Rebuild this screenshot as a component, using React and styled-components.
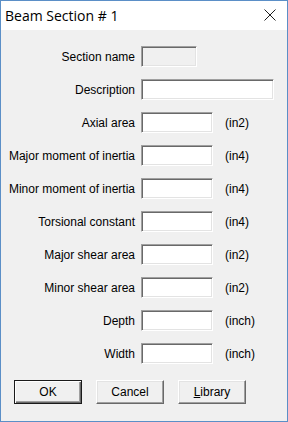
import React from "react";
import styled, { createGlobalStyle } from "styled-components";

const Global = createGlobalStyle`
  html, body { margin: 0; padding: 0; background: #f0f0f0; }
  body { width: 288px; height: 422px; overflow: hidden; }
`;

const Window = styled.div`
  box-sizing: border-box;
  width: 288px;
  height: 422px;
  border: 1px solid #5b8fc7;
  background: #f0f0f0;
  display: flex;
  flex-direction: column;
  font-family: "Liberation Sans", Arial, sans-serif;
  font-size: 12px;
  color: #000;
`;

const TitleBar = styled.div`
  height: 29px;
  background: #fff;
  display: flex;
  align-items: center;
  justify-content: space-between;
  padding: 0 11px 0 4px;
`;

const Title = styled.div`
  font-family: "Open Sans", "Noto Sans", sans-serif;
  font-size: 14px;
  color: #000;
  margin-top: 0px;
`;

const CloseIcon = styled.svg`
  width: 12px;
  height: 12px;
  display: block;
  margin-top: -1px;
`;

const Form = styled.div`
  display: flex;
  flex-direction: column;
  gap: 12px;
  padding-top: 16px;
`;

const Row = styled.div`
  display: flex;
  align-items: center;
  height: 21px;
`;

const Label = styled.div`
  width: 134px;
  text-align: right;
  margin-right: 6px;
  white-space: nowrap;
`;

const Field = styled.div`
  box-sizing: border-box;
  width: ${(p) => p.$w}px;
  height: 21px;
  background: ${(p) => (p.$disabled ? "#f0f0f0" : "#fff")};
  border-top: 1px solid #a0a0a0;
  border-left: 1px solid #a0a0a0;
  border-bottom: 1px solid #fff;
  border-right: 1px solid #fff;
  box-shadow: inset 1px 1px 0 #696969, inset -1px -1px 0 #e3e3e3;
`;

const Unit = styled.div`
  margin-left: 12px;
`;

const Buttons = styled.div`
  display: flex;
  gap: 14px;
  padding-left: 13px;
  margin-top: 4px;
`;

const Button = styled.div`
  box-sizing: border-box;
  width: 68px;
  height: 24px;
  display: flex;
  align-items: center;
  justify-content: center;
  background: #f0f0f0;
  border: 1px solid ${(p) => (p.$default ? "#1a1a1a" : "transparent")};
  border-top-color: ${(p) => (p.$default ? "#1a1a1a" : "#ffffff")};
  border-left-color: ${(p) => (p.$default ? "#1a1a1a" : "#ffffff")};
  border-bottom-color: ${(p) => (p.$default ? "#1a1a1a" : "#696969")};
  border-right-color: ${(p) => (p.$default ? "#1a1a1a" : "#696969")};
  box-shadow: ${(p) =>
    p.$default
      ? "inset 1px 1px 0 #fff, inset -1px -1px 0 #696969, inset -2px -2px 0 #a0a0a0"
      : "inset -1px -1px 0 #a0a0a0, inset 1px 1px 0 #e3e3e3"};
  font-family: "Liberation Sans", Arial, sans-serif;
  font-size: 12px;
`;

const Access = styled.span`
  text-decoration: underline;
`;

const rows = [
  { label: "Section name", w: 56, disabled: true },
  { label: "Description", w: 133 },
  { label: "Axial area", w: 72, unit: "(in2)" },
  { label: "Major moment of inertia", w: 72, unit: "(in4)" },
  { label: "Minor moment of inertia", w: 72, unit: "(in4)" },
  { label: "Torsional constant", w: 72, unit: "(in4)" },
  { label: "Major shear area", w: 72, unit: "(in2)" },
  { label: "Minor shear area", w: 72, unit: "(in2)" },
  { label: "Depth", w: 72, unit: "(inch)" },
  { label: "Width", w: 72, unit: "(inch)" },
];

export default function App() {
  return (
    <>
      <Global />
      <Window>
        <TitleBar>
          <Title>Beam Section # 1</Title>
          <CloseIcon viewBox="0 0 12 12">
            <path d="M0.5 0.5 L11.5 11.5 M11.5 0.5 L0.5 11.5" stroke="#1e1e1e" strokeWidth="1" fill="none" />
          </CloseIcon>
        </TitleBar>
        <Form>
          {rows.map((r) => (
            <Row key={r.label}>
              <Label>{r.label}</Label>
              <Field $w={r.w} $disabled={r.disabled} />
              {r.unit && <Unit>{r.unit}</Unit>}
            </Row>
          ))}
          <Buttons>
            <Button $default>OK</Button>
            <Button>Cancel</Button>
            <Button>
              <span>
                <Access>L</Access>ibrary
              </span>
            </Button>
          </Buttons>
        </Form>
      </Window>
    </>
  );
}
